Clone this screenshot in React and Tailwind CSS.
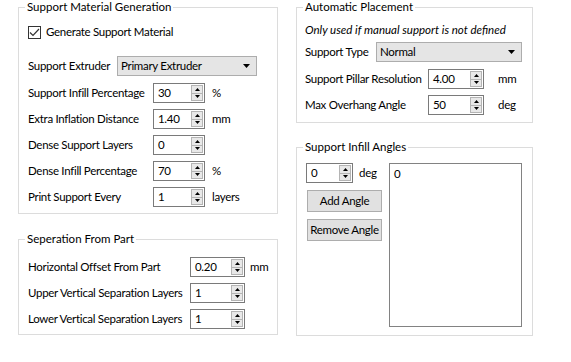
import React from 'react';

const Arrows = () => (
  <div className="flex flex-col w-[12px] my-[1px] mr-[1px] border border-[#b4b4b4] bg-[#e8e8e8]">
    <div className="flex-1 flex items-center justify-center border-b border-[#b4b4b4]">
      <svg width="5" height="3" viewBox="0 0 5 3"><path d="M0 3 L2.5 0 L5 3 Z" fill="#000" /></svg>
    </div>
    <div className="flex-1 flex items-center justify-center">
      <svg width="5" height="3" viewBox="0 0 5 3"><path d="M0 0 L2.5 3 L5 0 Z" fill="#000" /></svg>
    </div>
  </div>
);

const Spin = ({ value, className }) => (
  <div className={`flex h-[20px] border border-[#7a7a7a] bg-white ${className}`}>
    <span className="flex-1 pl-[4px] leading-[18px]">{value}</span>
    <Arrows />
  </div>
);

const Combo = ({ value, className }) => (
  <div className={`flex items-center h-[20px] border border-[#adadad] bg-[#e5e5e5] ${className}`}>
    <span className="flex-1 pl-[3px]">{value}</span>
    <svg className="mr-[6px]" width="7" height="4" viewBox="0 0 7 4"><path d="M0 0 L7 0 L3.5 4 Z" fill="#000" /></svg>
  </div>
);

const SpinRow = ({ label, labelW, value, spinW, unit, unitGap }) => (
  <div className="flex items-center h-[20px]">
    <span className={`shrink-0 ${labelW}`}>{label}</span>
    <Spin value={value} className={spinW} />
    {unit && <span className={unitGap}>{unit}</span>}
  </div>
);

const Group = ({ title, className, children }) => (
  <fieldset className={`border border-[#dcdcdc] ${className}`}>
    <legend className="px-[2px] leading-[14px] tracking-normal">{title}</legend>
    {children}
  </fieldset>
);

export default function App() {
  return (
    <div className="w-[571px] h-[362px] bg-white text-black text-[11.5px] tracking-[-0.3px] whitespace-nowrap font-['Lato',sans-serif] flex">
      {/* left column */}
      <div className="ml-[18px] w-[260px] flex flex-col">
        <Group title="Support Material Generation" className="pl-[9px] pb-[6px] [&>legend]:-ml-[3px]">
          <div className="flex items-center h-[16px] mt-[10px]">
            <div className="w-[13px] h-[13px] border border-[#333] bg-white flex items-center justify-center">
              <svg width="11" height="9" viewBox="0 0 11 9"><path d="M1 4.5 L4 7.5 L10 1" stroke="#333" strokeWidth="1.2" fill="none" /></svg>
            </div>
            <span className="ml-[5px]">Generate Support Material</span>
          </div>
          <div className="flex items-center mt-[16px]">
            <span className="w-[89px] shrink-0">Support Extruder</span>
            <Combo value="Primary Extruder" className="w-[140px]" />
          </div>
          <div className="flex flex-col gap-[6px] mt-[7px]">
            <SpinRow label="Support Infill Percentage" labelW="w-[125px]" value="30" spinW="w-[52px]" unit="%" unitGap="ml-[7px]" />
            <SpinRow label="Extra Inflation Distance" labelW="w-[125px]" value="1.40" spinW="w-[52px]" unit="mm" unitGap="ml-[7px]" />
            <SpinRow label="Dense Support Layers" labelW="w-[125px]" value="0" spinW="w-[52px]" />
            <SpinRow label="Dense Infill Percentage" labelW="w-[125px]" value="70" spinW="w-[52px]" unit="%" unitGap="ml-[7px]" />
            <SpinRow label="Print Support Every" labelW="w-[125px]" value="1" spinW="w-[52px]" unit="layers" unitGap="ml-[7px]" />
          </div>
        </Group>

        <Group title="Seperation From Part" className="mt-[18px] pl-[9px] pb-[5px] [&>legend]:-ml-[3px]">
          <div className="flex flex-col gap-[6px] mt-[11px]">
            <SpinRow label="Horizontal Offset From Part" labelW="w-[162px]" value="0.20" spinW="w-[55px]" unit="mm" unitGap="ml-[5px]" />
            <SpinRow label="Upper Vertical Separation Layers" labelW="w-[162px]" value="1" spinW="w-[55px]" />
            <SpinRow label="Lower Vertical Separation Layers" labelW="w-[162px]" value="1" spinW="w-[55px]" />
          </div>
        </Group>
      </div>

      {/* right column */}
      <div className="ml-[18px] w-[237px] flex flex-col">
        <Group title="Automatic Placement" className="pl-[8px] pb-[7px] [&>legend]:-ml-[2px]">
          <div className="h-[16px] mt-[8px] flex items-center italic tracking-normal">Only used if manual support is not defined</div>
          <div className="flex items-center mt-[4px]">
            <span className="w-[71px] shrink-0">Support Type</span>
            <Combo value="Normal" className="w-[146px]" />
          </div>
          <div className="flex flex-col gap-[6px] mt-[7px]">
            <SpinRow label="Support Pillar Resolution" labelW="w-[123px]" value="4.00" spinW="w-[56px]" unit="mm" unitGap="ml-[14px]" />
            <SpinRow label="Max Overhang Angle" labelW="w-[123px]" value="50" spinW="w-[56px]" unit="deg" unitGap="ml-[14px]" />
          </div>
        </Group>

        <Group title="Support Infill Angles" className="mt-[17px] pl-[8px] pb-[8px] [&>legend]:-ml-[2px]">
          <div className="flex mt-[9px]">
            <div className="w-[77px] flex flex-col">
              <div className="flex items-center ml-[1px]">
                <Spin value="0" className="w-[47px]" />
                <span className="ml-[6px]">deg</span>
              </div>
              <button className="ml-[2px] mt-[7px] w-[75px] h-[22px] border border-[#adadad] bg-[#e1e1e1]">Add Angle</button>
              <button className="ml-[2px] mt-[7px] w-[75px] h-[22px] border border-[#adadad] bg-[#e1e1e1]">Remove Angle</button>
            </div>
            <div className="ml-[7px] w-[133px] h-[164px] border border-[#828282] bg-white pl-[4px] pt-[1px]">0</div>
          </div>
        </Group>
      </div>
    </div>
  );
}
